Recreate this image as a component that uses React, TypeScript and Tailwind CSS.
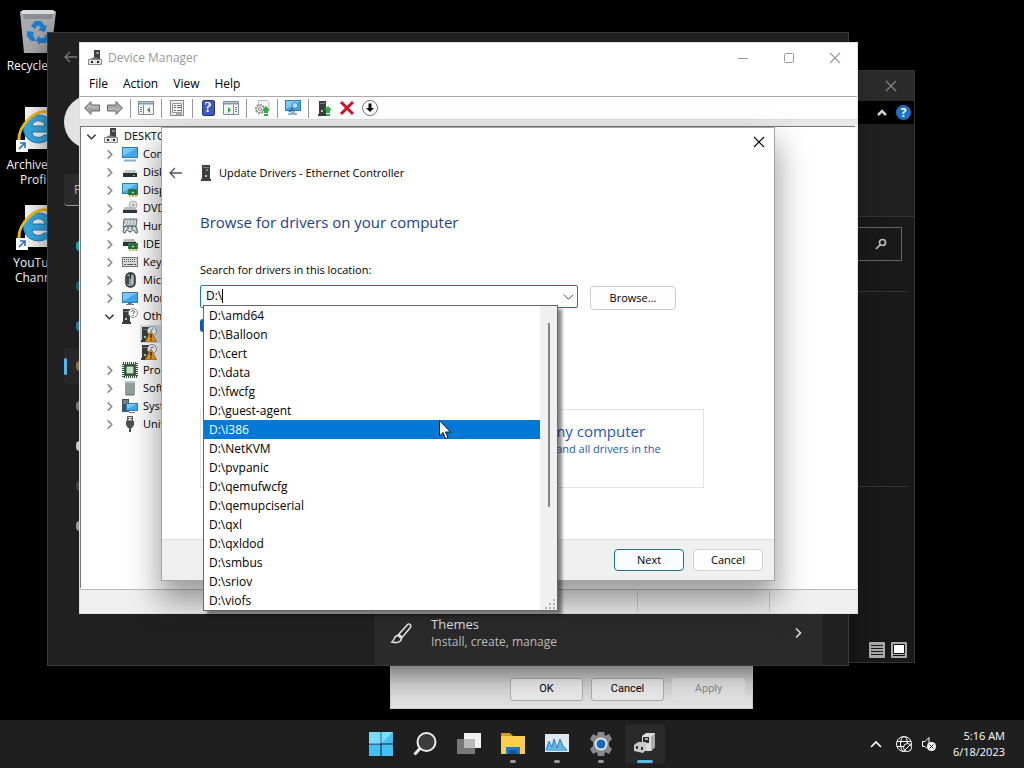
import type { ReactNode } from "react";

type IconName =
  | "root" | "computer" | "disk" | "display" | "dvd" | "hid" | "ide" | "keyboard" | "mouse"
  | "monitor" | "unknown" | "warning" | "cpu" | "software" | "system" | "usb" | "tower";

function Screen({ x = 0, y = 1, w = 16, h = 10 }: { x?: number; y?: number; w?: number; h?: number }) {
  return (
    <>
      <rect x={x} y={y} width={w} height={h} fill="#2f7fb5" />
      <path d={`M${x + 1} ${y + 1}h${w - 2}v${h - 2}h-${w - 2}z`} fill="#3fa9ee" />
      <path d={`M${x + 1} ${y + 1}h${w - 2}l-${w - 2} ${h - 3}z`} fill="#7cc9f7" />
    </>
  );
}

function Chip() {
  return (
    <>
      <path d="M6 7h10v6H6z" fill="#2f7d46" />
      <path d="M9 9h4v3H9z" fill="#9fd4a5" stroke="#174a28" />
      <path d="M7 14h2M10 14h2M13 14h2" stroke="#c9a227" strokeWidth="1.5" />
    </>
  );
}

function TowerShape() {
  return (
    <>
      <path d="M1 1h7v13H1zM0 14h9v2H0z" fill="#3b3f3d" />
      <path d="M2 3h5v1H2z" fill="#7c8580" />
      <path d="M3 10h2v2H3z" fill="#a8cfb0" />
    </>
  );
}

const glyphs: Record<IconName, ReactNode> = {
  root: (
    <>
      <path d="M7 0h6v9H7z" fill="#3f4143" />
      <path d="M9 2h3v2H9z" fill="#8a8f93" />
      <path d="M1.500 9.500h13v5h-13z" fill="#e4e4e4" stroke="#888" />
      <path d="M4 11h2v2H4zM10 11h2v2h-2z" fill="#222" />
      <path d="M7 7l-4 2h10z" fill="#777" />
    </>
  ),
  computer: (
    <>
      <Screen y={1} h={11} />
      <path d="M2 14.5h12" stroke="#7fb0d2" strokeWidth="2" />
    </>
  ),
  monitor: (
    <>
      <Screen y={2} h={11} />
      <path d="M6 13h4v1H6zM4 14h8v1H4z" fill="#777" />
    </>
  ),
  disk: (
    <>
      <path d="M3 6h10l2 3H1z" fill="#c9cbcb" />
      <path d="M1 9h14v4H1z" fill="#2d3131" />
      <path d="M11 11h2v1h-2z" fill="#67d66f" />
    </>
  ),
  display: (
    <>
      <Screen y={1} h={11} />
      <Chip />
    </>
  ),
  dvd: (
    <>
      <circle cx="11" cy="5" r="4" fill="#dfe3e6" stroke="#aeb4b8" />
      <circle cx="11" cy="5" r="1" fill="#8d9499" />
      <path d="M3 7h9l3 3H1z" fill="#b9bcbe" />
      <path d="M1 10h14v3H1z" fill="#303535" />
    </>
  ),
  hid: (
    <>
      <path d="M2 1h13l-1 8H1z" fill="#aeb9be" stroke="#65747b" />
      <path d="M3 3h11M3 5h11M2 7h11" stroke="#eef2f3" strokeDasharray="2 1" />
      <path d="M2 15c-2-1 0-7 2-7h8c3 0 4 6 3 7-2 1-2-3-4-3-1 0-1 2-3 2s-2-2-3-2c-2 0-1 4-3 3z" fill="#cfd8dc" stroke="#3d4c53" />
      <path d="M6 8v3M10 8v3" stroke="#3d4c53" />
    </>
  ),
  ide: (
    <>
      <path d="M2 3h10l2 3H1z" fill="#c0c3c3" />
      <path d="M1 6h13v4H1z" fill="#2d3131" />
      <Chip />
    </>
  ),
  keyboard: (
    <>
      <rect x="0.5" y="3.5" width="15" height="9" fill="#d9dcde" stroke="#777" />
      <path d="M2 5.5h12M2 7.5h12" stroke="#4f5558" strokeDasharray="1 1" />
      <path d="M2 10.500h2M5 10.500h6M12 10.500h2" stroke="#4f5558" />
    </>
  ),
  mouse: (
    <>
      <rect x="4" y="1" width="9" height="14" rx="4" fill="#8e979c" stroke="#2a2f33" strokeWidth="1.500" />
      <path d="M8.500 1v6M6 4v8" stroke="#2a2f33" strokeWidth="1.500" />
      <path d="M10 4v8" stroke="#dbe0e3" />
    </>
  ),
  unknown: (
    <>
      <TowerShape />
      <circle cx="11" cy="5" r="4.500" fill="#fff" stroke="#8b9298" />
      <path d="M9.500 4c0-2 3-2 3 0 0 1-1.500 1-1.500 2M11 7v1" fill="none" stroke="#444" />
    </>
  ),
  warning: (
    <>
      <TowerShape />
      <circle cx="11" cy="5" r="4.500" fill="#fff" stroke="#8b9298" />
      <path d="M9.500 4l3-1" stroke="#2855b8" />
      <path d="M10 5l5.500 10.500h-11z" fill="#f3a622" stroke="#c47d10" />
      <path d="M10 8v4M10 13v1.500" stroke="#4a2c00" strokeWidth="1.500" />
    </>
  ),
  cpu: (
    <>
      <rect x="1" y="1" width="14" height="14" fill="none" stroke="#2d4e35" strokeWidth="2" strokeDasharray="1 1" />
      <rect x="2" y="2" width="12" height="12" fill="#3e6b4a" />
      <rect x="4" y="4" width="8" height="8" fill="#cfe5d0" stroke="#1f3b27" />
    </>
  ),
  software: (
    <>
      <rect x="3" y="1" width="10" height="14" fill="#8fa09f" />
      <path d="M3 1h10v2H3z" fill="#bac6c5" />
      <path d="M4 15h8" stroke="#5f7170" />
      <path d="M10 4h2" stroke="#52e0b5" />
    </>
  ),
  system: (
    <>
      <path d="M0 1h7v13H0z" fill="#475057" />
      <path d="M1 3h5M1 5h5" stroke="#a9b4bb" />
      <Screen x={4} y={5} w={12} h={8} />
      <path d="M7 14h6v1H7z" fill="#777" />
    </>
  ),
  usb: (
    <>
      <path d="M5.500.5h5V5h-5z" fill="#d5d5d5" stroke="#555" />
      <path d="M6 2h1v1H6zM9 2h1v1H9z" fill="#333" />
      <path d="M4 5h8v4l-2 3H6l-2-3z" fill="#4b4f52" />
      <path d="M8 12v4" stroke="#4b4f52" strokeWidth="2" />
    </>
  ),
  tower: (
    <>
      <path d="M4 0h8v14H4zM3 14h10v2H3z" fill="#3b3f3d" />
      <path d="M5 2h6v1H5zM8 4h2v2H8z" fill="#7c8580" />
      <path d="M7 10h2v2H7z" fill="#a8cfb0" />
    </>
  ),
};

function Glyph({ name, className = "size-4" }: { name: IconName; className?: string }) {
  return (
    <svg viewBox="0 0 16 16" className={`shrink-0 ${className}`} aria-hidden="true">
      {glyphs[name]}
    </svg>
  );
}

function Chevron({ dir, className }: { dir: "right" | "down" | "up"; className: string }) {
  const d = { right: "M4 1.500l4.500 4.500-4.500 4.500", down: "M1.500 4l4.500 4.500 4.500-4.500", up: "M1 9l5-5 5 5" }[dir];
  return (
    <svg viewBox="0 0 12 12" className={`shrink-0 ${className}`} aria-hidden="true">
      <path d={d} fill="none" stroke="currentColor" strokeWidth="1.6" />
    </svg>
  );
}

function Cross({ className }: { className: string }) {
  return (
    <svg viewBox="0 0 12 12" className={className} aria-hidden="true">
      <path d="M1 1l10 10M11 1L1 11" stroke="currentColor" strokeWidth="1.1" />
    </svg>
  );
}

function BackArrow({ className }: { className: string }) {
  return (
    <svg viewBox="0 0 14 12" className={className} aria-hidden="true">
      <path d="M13 6H1M6 1L1 6l5 5" fill="none" stroke="currentColor" strokeWidth="1.3" />
    </svg>
  );
}

/* ---------- Desktop shortcuts ---------- */

function RecycleBin() {
  return (
    <svg viewBox="0 0 36 44" className="h-11 w-9" aria-hidden="true">
      <path d="M0 2h36l-5 41H4z" fill="#a9abad" />
      <path d="M0 2l3-2h30l3 2-3 2H3z" fill="#d8dadb" />
      <path d="M3 4h30l-1 5H4z" fill="#8c8f91" />
      <g fill="#1c7fd6">
        <path d="M11 16l4-5h6l4 5 2-1-2 7-7-2 3-2-3-3-3 4z" />
        <path d="M7 21l7 1-1 3 3 6h-5l-4-5z" />
        <path d="M19 26l1 2h4l2-4 3 3-3 6h-6v2l-4-5z" />
      </g>
    </svg>
  );
}

function BrowserShortcut() {
  return (
    <svg viewBox="2 0 44 46" className="h-[46px] w-11" aria-hidden="true">
      <path d="M11 0h35v42H11z" fill="#f4f4f4" />
      <path d="M25 8a15 14 0 1 0 13 20h-8c-3 4-12 3-12-3h21c1-10-5-17-14-17zm-7 11c1-7 12-7 13 0z" fill="#35a9e0" stroke="#1c7fb9" />
      <path d="M5 33C4 19 22 0 36 6" fill="none" stroke="#f0b81c" strokeWidth="3" />
      <path d="M2 33h12v12H2z" fill="#fff" />
      <path d="M5 42l6-6M6 36h5v5" fill="none" stroke="#2a6fc0" strokeWidth="1.6" />
    </svg>
  );
}

function Shortcut({ icon, lines }: { icon: ReactNode; lines: string[] }) {
  return (
    <a href="#open" className="flex w-19 flex-col items-center text-center text-xs leading-[15px] text-white">
      {icon}
      <span className="mt-1 flex flex-col">
        {lines.map((line) => <span key={line}>{line}</span>)}
      </span>
    </a>
  );
}

/* ---------- Background windows ---------- */

function EditorWindow() {
  return (
    <section aria-label="Editor" className="absolute top-[70px] left-[514px] flex h-[593px] w-[401px] flex-col border border-[#333] bg-[#191919] text-[#b5b5b5]">
      <div className="flex h-[30px] shrink-0 items-center justify-end bg-[#2b2b2b] pr-[17px]">
        <button aria-label="Close editor"><Cross className="size-3 text-[#888]" /></button>
      </div>
      <div className="flex h-[23px] shrink-0 items-center justify-end gap-2 bg-black pr-[3px]">
        <button aria-label="Collapse ribbon">
          <svg viewBox="0 0 12 12" className="size-3" aria-hidden="true">
            <path d="M2 8l4-4 4 4" fill="none" stroke="#d0d0d0" strokeWidth="2.5" />
          </svg>
        </button>
        <button aria-label="Help" className="size-[15px] rounded-full bg-[#1b72c8] text-xs leading-[15px] font-bold text-white">?</button>
      </div>
      <div className="h-[93px] shrink-0 border-b border-[#333] bg-[#202020]" />
      <div className="flex h-[74px] shrink-0 pt-[10px] pr-3">
        <button aria-label="Search" className="flex h-[34px] w-full items-center justify-end border border-[#666] pr-[14px]">
          <svg viewBox="0 0 12 12" className="size-3" aria-hidden="true">
            <circle cx="7.500" cy="4.500" r="3" fill="none" stroke="#bbb" strokeWidth="1.7" />
            <path d="M5.500 6.500L1 11" stroke="#bbb" strokeWidth="1.7" />
          </svg>
        </button>
      </div>
      <div className="mr-1.5 h-[196px] shrink-0 border-y border-[#333]" />
      <div className="flex flex-1 items-end justify-end gap-1.5 pr-[7px] pb-1">
        <button aria-label="Document view">
          <svg viewBox="0 0 16 16" className="size-4" aria-hidden="true">
            <rect width="16" height="16" rx="1" fill="#aaa" />
            <path d="M2 3.500h12M2 6.500h12M2 9.500h12M2 12.500h12" stroke="#1a1a1a" />
          </svg>
        </button>
        <button aria-label="Page view">
          <svg viewBox="0 0 16 16" className="size-4" aria-hidden="true">
            <rect width="16" height="16" rx="1" fill="#aaa" />
            <path d="M2.500 2.500h11v9h-11z" fill="#fff" stroke="#111" />
            <path d="M2 13.500h12" stroke="#111" />
          </svg>
        </button>
      </div>
    </section>
  );
}

function PropertiesDialog() {
  const button = "h-[23px] w-[73px] rounded-[3px] border border-[#aaa] bg-[#e6e6e6]";
  return (
    <section aria-label="Properties" className="absolute top-[640px] left-[390px] flex h-[69px] w-[363px] items-end justify-end gap-2 border border-[#ccc] bg-linear-to-b from-[#a8a8a8] to-[#e4e4e4] pr-[7px] pb-[7px] font-['Roboto','Liberation_Sans',sans-serif] text-[11px] text-black">
      <button className={button}>OK</button>
      <button className={button}>Cancel</button>
      <button disabled className="h-[23px] w-[73px] rounded-[3px] bg-[#dedede] text-[#888]">Apply</button>
    </section>
  );
}

const sections = [
  { name: "System", tint: "bg-[#18a4a0]" },
  { name: "Bluetooth & devices", tint: "bg-[#1f5d66]" },
  { name: "Network", tint: "bg-[#2b7d9e]" },
  { name: "Personalization", tint: "bg-[#8a6f4a]" },
  { name: "Apps", tint: "bg-[#777]" },
  { name: "Accounts", tint: "bg-[#c9c9c9]" },
  { name: "Time & language", tint: "bg-[#444]" },
  { name: "Gaming", tint: "bg-[#999]" },
];

function SettingsWindow() {
  return (
    <section aria-label="Settings" className="absolute top-8 left-[47px] flex h-[634px] w-[802px] border border-[#3a3a3a] bg-[#202020] text-[#ccc] shadow-[0_4px_24px_rgba(0,0,0,0.5)]">
      <nav aria-label="Settings sections" className="flex w-[327px] shrink-0 flex-col items-start pl-4">
        <button aria-label="Back" className="mt-[18px]"><BackArrow className="h-3 w-3.5 text-[#777]" /></button>
        <div className="mt-8 size-[54px] rounded-full bg-[#e2e2e2]" />
        <input
          aria-label="Find a setting"
          placeholder="Find a setting"
          className="mt-[25px] h-8 w-[270px] rounded border-b border-[#999] bg-[#2b2b2b] pl-[10px] text-xs placeholder:text-[#bbb]"
        />
        <ul className="mt-[22px] flex flex-col gap-1">
          {sections.map(({ name, tint }) => (
            <li key={name}>
              <a
                href="#section"
                aria-label={name}
                className={name === "Personalization" ? "flex h-9 w-[270px] items-center gap-[9px] rounded bg-[#272727]" : "flex h-9 w-[270px] items-center gap-[9px] rounded"}
              >
                <span className={name === "Personalization" ? "h-[17px] w-[3px] rounded-full bg-[#4cb8f5]" : "h-[17px] w-[3px]"} />
                <span className={`size-2.5 rounded-sm ${tint}`} />
              </a>
            </li>
          ))}
        </ul>
      </nav>
      <main className="flex flex-1 flex-col justify-end pr-[26px]">
        <a href="#themes" className="flex h-[60px] items-center gap-[18px] border-x border-[#303030] bg-[#2a2a2a] pr-[17px] pb-1 pl-3.5">
          <svg viewBox="0 0 24 24" className="size-[23px]" aria-hidden="true">
            <path d="M8 14L18 3c2-2 5 0 3 3L12 17zM8 14c-4 0-3 5-6 7 4 1 9 1 10-4zM9.500 13l3.500 3" fill="none" stroke="#e0e0e0" strokeWidth="1.6" />
          </svg>
          <span className="flex flex-1 flex-col leading-[18px]">
            <span className="text-[13px] text-[#ddd]">Themes</span>
            <span className="text-xs leading-[18px] text-[#bbb]">Install, create, manage</span>
          </span>
          <Chevron dir="right" className="size-3 text-[#ddd]" />
        </a>
      </main>
    </section>
  );
}

/* ---------- Device Manager ---------- */

const tree: { label: string; icon: IconName; open?: boolean; children?: string[] }[] = [
  { label: "Computer", icon: "computer" },
  { label: "Disk drives", icon: "disk" },
  { label: "Display", icon: "display" },
  { label: "DVD/CD", icon: "dvd" },
  { label: "Human", icon: "hid" },
  { label: "IDE ATA", icon: "ide" },
  { label: "Keyboards", icon: "keyboard" },
  { label: "Mice", icon: "mouse" },
  { label: "Monitors", icon: "monitor" },
  { label: "Other", icon: "unknown", open: true, children: ["Ethernet Controller", "PCI Device"] },
  { label: "Processors", icon: "cpu" },
  { label: "Software", icon: "software" },
  { label: "System", icon: "system" },
  { label: "Universal", icon: "usb" },
];

function ToolArrow({ flip = false }: { flip?: boolean }) {
  return (
    <svg viewBox="0 0 16 16" className={flip ? "size-4 rotate-180" : "size-4"} aria-hidden="true">
      <path d="M.5 8L7 1.500V5h8.500v6H7v3.500z" fill="#a5a5a5" stroke="#6c6c6c" />
      <path d="M3 8l3-3v2h9" fill="none" stroke="#c8c8c8" />
    </svg>
  );
}

function PaneIcon({ flip = false }: { flip?: boolean }) {
  return (
    <svg viewBox="0 0 16 16" className="size-4" aria-hidden="true">
      <path d="M.5 1.500h15v13H.5z" fill="#f4f6f7" stroke="#7f8c92" />
      <path d="M1 3.500h14" stroke="#7f9db0" strokeWidth="2" />
      <path d={flip ? "M10.500 5v9" : "M5.500 5v9"} stroke="#7f8c92" />
      <path d={flip ? "M12 7.500h2M12 9.500h2M12 11.500h2" : "M2 7.500h2M2 9.500h2M2 11.500h2"} stroke="#6e7c84" />
      <path d={flip ? "M5 7v6l3-3z" : "M12 7v6l-3-3z"} fill="#3f9a4b" />
    </svg>
  );
}

const toolbar: { label: string; icon: ReactNode }[][] = [
  [
    { label: "Back", icon: <ToolArrow /> },
    { label: "Forward", icon: <ToolArrow flip /> },
  ],
  [{ label: "Show console tree", icon: <PaneIcon /> }],
  [{
    label: "Properties",
    icon: (
      <svg viewBox="0 0 16 16" className="size-4" aria-hidden="true">
        <path d="M1.500.5h13v15h-13z" fill="#eceeef" stroke="#888" />
        <path d="M3.500 3.500h9v9h-9z" fill="#fff" stroke="#999" />
        <path d="M5 5.500h2M8 5.500h4M5 7.500h2M8 7.500h4M5 10.500h2M8 10.500h4M7 14h6" stroke="#667" />
      </svg>
    ),
  }],
  [
    {
      label: "Help",
      icon: (
        <span className="flex h-4 w-[13px] items-center justify-center rounded-xs border border-[#27357c] bg-[#3f5cc0] font-['Liberation_Serif',serif] text-sm leading-none font-bold text-white">?</span>
      ),
    },
    { label: "Show action pane", icon: <PaneIcon flip /> },
  ],
  [{
    label: "Scan for hardware changes",
    icon: (
      <svg viewBox="0 0 16 16" className="size-4" aria-hidden="true">
        <path d="M4.500.5H13l2 2V11H4.500z" fill="#f3f3f3" stroke="#bbb" />
        <circle cx="6" cy="9" r="4" fill="#eee" stroke="#8a8a8a" strokeWidth="2" strokeDasharray="2 1" />
        <circle cx="6" cy="9" r="1.500" fill="#fff" stroke="#8a8a8a" />
        <path d="M12 6l4 4.500h-2V13h-4v-2.500H8zM10 14h4v2h-4z" fill="#2fae44" />
      </svg>
    ),
  }],
  [{
    label: "Devices",
    icon: (
      <svg viewBox="0 0 16 16" className="size-4" aria-hidden="true">
        <Screen x={0} y={0} w={16} h={11} />
        <path d="M3 14h9M6 12h4" stroke="#6f9dbc" strokeWidth="1.500" />
        <circle cx="10" cy="5.500" r="3" fill="#a9dcfa" stroke="#557f9b" />
        <path d="M8 8l-4 4" stroke="#3a5d76" strokeWidth="1.500" />
      </svg>
    ),
  }],
  [
    {
      label: "Update driver",
      icon: (
        <svg viewBox="0 0 16 16" className="size-4" aria-hidden="true">
          <g transform="translate(2 0)"><TowerShape /></g>
          <path d="M12 6l4 4h-2v3h-4v-3H8zM10 14h4v2h-4z" fill="#2fae44" />
        </svg>
      ),
    },
    {
      label: "Uninstall device",
      icon: (
        <svg viewBox="0 0 16 16" className="size-4" aria-hidden="true">
          <path d="M2 2l12 12M14 2L2 14" stroke="#cf1326" strokeWidth="3" />
        </svg>
      ),
    },
    {
      label: "Disable device",
      icon: (
        <svg viewBox="0 0 16 16" className="size-4" aria-hidden="true">
          <circle cx="8" cy="8" r="7.500" fill="#fff" stroke="#777" />
          <path d="M6.500 3.500h3V8H12l-4 4-4-4h2.500z" fill="#111" />
        </svg>
      ),
    },
  ],
];

function DeviceManager() {
  return (
    <section aria-label="Device Manager" className="absolute top-[42px] left-[79px] flex h-[572px] w-[779px] flex-col border border-[#e0e0e0] bg-white text-black">
      <header className="flex h-[29px] shrink-0 items-center pl-[7px] text-[#999]">
        <Glyph name="root" />
        <h1 className="ml-[5px] flex-1 text-xs">Device Manager</h1>
        <div className="flex gap-[34px] pr-4">
          <button aria-label="Minimize">
            <svg viewBox="0 0 12 12" className="size-3" aria-hidden="true"><path d="M1 6.500h10" stroke="currentColor" /></svg>
          </button>
          <button aria-label="Maximize">
            <svg viewBox="0 0 12 12" className="size-3" aria-hidden="true"><rect x="1.500" y="1.500" width="9" height="9" rx="1" fill="none" stroke="currentColor" /></svg>
          </button>
          <button aria-label="Close"><Cross className="size-3" /></button>
        </div>
      </header>
      <div className="flex h-[25px] shrink-0 items-center gap-[15px] border-b border-[#aaa] pl-[9px] text-xs">
        {["File", "Action", "View", "Help"].map((item) => <button key={item}>{item}</button>)}
      </div>
      <div role="toolbar" aria-label="Actions" className="flex h-[23px] shrink-0 items-center divide-x divide-[#999] border-b border-[#ddd] pl-1">
        {toolbar.map((group) => (
          <div key={group[0].label} className="flex gap-[7px] px-[7px] first:pl-0">
            {group.map((tool) => (
              <button key={tool.label} aria-label={tool.label} className="flex h-[19px] min-w-4 items-center justify-center">{tool.icon}</button>
            ))}
          </div>
        ))}
      </div>
      <div className="h-1.5 shrink-0 bg-[#e8e8e8]" />
      <div className="mr-[2px] flex-1 overflow-hidden border-t border-l border-[#777] pl-[5px] text-[11px] leading-[18px]">
        <ul role="tree" aria-label="Devices" className="whitespace-nowrap">
          <li role="treeitem" aria-expanded="true">
            <div className="flex h-[18px] items-center">
              <Chevron dir="down" className="size-[11px] text-[#333]" />
              <Glyph name="root" className="ml-1.5 size-4" />
              <span className="ml-[5px]">DESKTOP</span>
            </div>
            <ul role="group">
              {tree.map((node) => (
                <li key={node.label} role="treeitem" aria-expanded={Boolean(node.open)}>
                  <div className="flex h-[18px] items-center pl-[18px]">
                    <Chevron dir={node.open ? "down" : "right"} className={node.open ? "size-[11px] text-[#333]" : "size-[11px] text-[#888]"} />
                    <Glyph name={node.icon} className="ml-[7px] size-4" />
                    <span className="ml-[5px]">{node.label}</span>
                  </div>
                  {node.children && (
                    <ul role="group">
                      {node.children.map((child, i) => (
                        <li key={child} role="treeitem" aria-label={child} className="flex h-[18px] items-center pl-[54px]">
                          <span className={i === 0 ? "flex w-40 bg-[#d5e5f2] p-px" : "flex w-40 p-px"}>
                            <Glyph name="warning" />
                          </span>
                        </li>
                      ))}
                    </ul>
                  )}
                </li>
              ))}
            </ul>
          </li>
        </ul>
      </div>
      <footer className="mt-px flex h-[24px] shrink-0 justify-end border-t border-[#bbb] bg-[#f0f0f0]">
        <div className="my-px w-[133px] border-x border-[#ccc]" />
        <div className="w-[87px]" />
      </footer>
    </section>
  );
}

/* ---------- Update Drivers wizard ---------- */

function UpdateDrivers() {
  return (
    <section
      role="dialog"
      aria-labelledby="wizard-title"
      className="absolute top-[127px] left-[161px] flex h-[454px] w-[614px] flex-col border border-[#a5a5a5] bg-white text-[11px] leading-4 text-black shadow-[0_18px_30px_2px_rgba(0,0,0,0.4)]"
    >
      <div className="flex h-7 shrink-0 items-center justify-end pr-[9px]">
        <button aria-label="Close wizard"><Cross className="size-3 text-black" /></button>
      </div>
      <div className="flex h-[34px] shrink-0 items-center pl-[7px]">
        <button aria-label="Previous step"><BackArrow className="h-3 w-3.5 text-[#555]" /></button>
        <Glyph name="tower" className="ml-[15px] size-4" />
        <h2 id="wizard-title" className="ml-[5px]">Update Drivers - Ethernet Controller</h2>
      </div>
      <div className="flex flex-1 flex-col pt-[22px] pr-[70px] pl-[38px]">
        <h3 className="text-[15px] leading-5 text-[#1c3f94]">Browse for drivers on your computer</h3>
        <label htmlFor="location" className="mt-[29px] leading-[18px]">Search for drivers in this location:</label>
        <div className="mt-1.5 mr-7 flex gap-3">
          <div className="flex h-[23px] flex-1 items-center rounded-xs border border-[#1a7aa6] pr-[3px] pb-px pl-[5px]">
            <input id="location" defaultValue={"D:\\"} className="field-sizing-content text-xs outline-none" />
            <span className="h-3.5 w-px bg-black" />
            <button aria-label="Show folders" className="ml-auto">
              <svg viewBox="0 0 12 12" className="size-[11px]" aria-hidden="true"><path d="M1 4l5 5 5-5" fill="none" stroke="#333" /></svg>
            </button>
          </div>
          <button className="mt-px h-6 w-[86px] rounded border border-[#ccc] bg-[#fdfdfd]">Browse...</button>
        </div>
        <label className="mt-[9px] flex items-center">
          <input type="checkbox" aria-label="Include subfolders" defaultChecked className="size-[13px] appearance-none rounded-[3px] bg-[#0f5cae]" />
        </label>
        <button className="mt-[77px] h-[79px] border border-[#e3e3e3] pr-6 pb-1 pl-[35px] text-left text-[#1f56b8]">
          <span className="block text-[15px] leading-5 whitespace-nowrap">Let me pick from a list of available drivers on my computer</span>
          <span className="block">This list will show available drivers compatible with the device, and all drivers in the same category as the device.</span>
        </button>
      </div>
      <footer className="flex h-[41px] shrink-0 items-center justify-end gap-[9px] border-t border-[#ddd] bg-[#f0f0f0] pr-[11px]">
        <button className="h-[22px] w-[70px] rounded border border-[#1a6f93] bg-[#fafdff]">Next</button>
        <button className="h-[22px] w-[70px] rounded border border-[#d0d0d0] bg-[#fdfdfd]">Cancel</button>
      </footer>
    </section>
  );
}

const folders = [
  "amd64", "Balloon", "cert", "data", "fwcfg", "guest-agent", "i386", "NetKVM",
  "pvpanic", "qemufwcfg", "qemupciserial", "qxl", "qxldod", "smbus", "sriov", "viofs",
];

function FolderList() {
  return (
    <div className="absolute top-[305px] left-[203px] flex w-[355px] border border-[#666] bg-white text-xs text-black shadow-[4px_4px_3px_rgba(0,0,0,0.45)]">
      <ul role="listbox" aria-label="Folders" className="flex-1">
        {folders.map((name) => (
          <li
            key={name}
            role="option"
            aria-selected={name === "i386"}
            className="h-[19px] pl-[5px] leading-[19px] aria-selected:bg-[#0078d7] aria-selected:text-white"
          >
            {"D:\\" + name}
          </li>
        ))}
      </ul>
      <div className="flex w-[17px] flex-col items-center justify-between bg-[#f0f0f0] pt-[17px]">
        <div className="h-[184px] w-[2px] bg-[#858585]" />
        <svg viewBox="0 0 12 12" className="size-3 self-end" aria-hidden="true">
          <path d="M8 1h2v2H8zM8 5h2v2H8zM8 9h2v2H8zM4 5h2v2H4zM4 9h2v2H4zM0 9h2v2H0z" fill="#b5b5b5" />
        </svg>
      </div>
    </div>
  );
}

/* ---------- Taskbar ---------- */

const apps: { label: string; state: "none" | "running" | "active"; icon: ReactNode }[] = [
  {
    label: "Start",
    state: "none",
    icon: <><path d="M0 0h11.500v11.500H0zM12.500 0H24v11.500H12.500zM0 12.500h11.500V24H0zM12.500 12.500H24V24H12.500z" fill="#43c0f5" /><path d="M0 0h11.500v11.500H0zM12.500 0H24L12.500 11.500z" fill="#7bdcfa" /></>,
  },
  {
    label: "Search",
    state: "none",
    icon: <><circle cx="13.500" cy="10" r="9" fill="#3b3b3b" stroke="#eee" strokeWidth="2" /><path d="M7 16.500L1.500 22.500" stroke="#eee" strokeWidth="3" /></>,
  },
  {
    label: "Task view",
    state: "none",
    icon: <><path d="M7 1h17v15H7z" fill="#f1f1f1" /><path d="M0 7h18v15H0z" fill="#777" /><path d="M7 7h11v9H7z" fill="#b9b9b9" /></>,
  },
  {
    label: "File Explorer",
    state: "running",
    icon: <><path d="M0 1h9l3 3H0z" fill="#d99a1a" /><path d="M0 4h24v18H0z" fill="#fbcf4b" /><path d="M5 15h14v7H5z" fill="#1e78c8" /><path d="M8 18h8v4H8z" fill="#12579b" /></>,
  },
  {
    label: "Performance Monitor",
    state: "running",
    icon: <><path d="M0 2h24v18H0z" fill="#dfe8ee" /><path d="M1 19l3-10 3 6 2-8 3 9 3-9 3 7 4 4v1z" fill="#63b5e3" /><path d="M1 18l3-9 3 6 2-8 3 9 3-9 3 7 4 4" fill="none" stroke="#2f82b8" /></>,
  },
  {
    label: "Settings",
    state: "running",
    icon: <><path d="M9 0h6l1 4 4-2 3 5-3 3v4l3 3-3 5-4-2-1 4H9l-1-4-4 2-3-5 3-3v-4L1 7l3-5 4 2z" fill="#868a8d" /><circle cx="12" cy="12" r="6.500" fill="#dfe9f2" /><circle cx="12" cy="12" r="4.500" fill="#1668b8" /></>,
  },
  {
    label: "Device Manager",
    state: "active",
    icon: <><path d="M9 4l4-3h9v14l-4 4h-9z" fill="#dcdcdc" /><path d="M18 5l4-4v14l-4 4z" fill="#aaa" /><path d="M10 5h6v6h-6z" fill="#2f2f2f" /><path d="M12 6h3v2h-3z" fill="#aaa" /><path d="M1 13l4-3h8v8l-3 3-9-2z" fill="#c9c9c9" /><path d="M3 14h2v3H3zM8 15h2v3H8z" fill="#333" /></>,
  },
];

function Taskbar() {
  return (
    <footer className="relative grid h-12 shrink-0 grid-cols-[1fr_auto_1fr] items-center bg-[#1f1f1f] text-white">
      <span />
      <nav aria-label="Taskbar" className="flex gap-1 pl-px">
        {apps.map((app) => (
          <button
            key={app.label}
            aria-label={app.label}
            className={app.state === "active" ? "flex h-10 w-10 flex-col items-center rounded bg-[#2a2a2a] pt-2" : "flex h-10 w-10 flex-col items-center rounded pt-2"}
          >
            <svg viewBox="0 0 24 24" className="size-6" aria-hidden="true">{app.icon}</svg>
            {app.state === "running" && <span className="mt-1 h-[3px] w-1.5 rounded-full bg-[#9a9a9a]" />}
            {app.state === "active" && <span className="mt-1 h-[3px] w-4 rounded-full bg-[#5cb8e6]" />}
          </button>
        ))}
      </nav>
      <div className="flex items-center justify-end pr-[19px]">
        <button aria-label="Hidden icons"><Chevron dir="up" className="size-3" /></button>
        <button aria-label="Network" className="ml-3.5">
          <svg viewBox="0 0 16 16" className="size-4" fill="none" stroke="#fff" aria-hidden="true">
            <circle cx="8" cy="8" r="7.500" />
            <ellipse cx="8" cy="8" rx="3.500" ry="7.500" />
            <path d="M1 5.500h14M1 10.500h14" />
            <circle cx="11.500" cy="11.500" r="4" fill="#1f1f1f" />
            <path d="M9 14l5-5" />
          </svg>
        </button>
        <button aria-label="Volume" className="ml-[9px]">
          <svg viewBox="0 0 16 16" className="size-4" aria-hidden="true">
            <path d="M6 12.500L4 10.500H1.500v-5H4L8 1.500V7" fill="none" stroke="#fff" />
            <circle cx="10.500" cy="10.500" r="4.500" fill="#fff" />
            <path d="M8.500 8.500l4 4M12.500 8.500l-4 4" stroke="#1f1f1f" />
          </svg>
        </button>
        <button className="ml-4 flex flex-col text-right text-[11px] leading-4">
          <span>5:16 AM</span>
          <span>6/18/2023</span>
        </button>
      </div>
    </footer>
  );
}

export default function App() {
  return (
    <div className="relative flex min-h-screen flex-col overflow-hidden bg-black font-['Open_Sans','Noto_Sans',sans-serif]">
      <div className="relative flex-1">
        <div className="flex flex-col items-start pt-2.5">
          <Shortcut icon={<RecycleBin />} lines={["Recycle Bin"]} />
          <div className="mt-[34px]"><Shortcut icon={<BrowserShortcut />} lines={["Archive.org", "Profile"]} /></div>
          <div className="mt-[18px]"><Shortcut icon={<BrowserShortcut />} lines={["YouTube", "Channel"]} /></div>
        </div>
        <PropertiesDialog />
        <EditorWindow />
        <SettingsWindow />
        <DeviceManager />
        <UpdateDrivers />
        <FolderList />
        <svg viewBox="0 0 12 19" className="absolute top-[420px] left-[439px] h-[19px] w-3" aria-hidden="true">
          <path d="M.5.5v15.500l3.500-3.500 2.500 6 2.500-1-2.500-5.500h5z" fill="#fff" stroke="#111" />
        </svg>
      </div>
      <Taskbar />
    </div>
  );
}
